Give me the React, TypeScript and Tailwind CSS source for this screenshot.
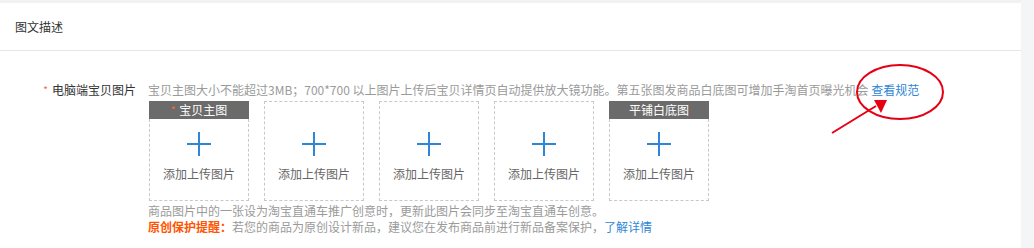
import React from "react";

const font = { fontFamily: '"Noto Sans CJK SC", "Noto Sans", sans-serif' };

function Plus() {
  return (
    <svg width="24" height="24" viewBox="0 0 24 24" className="block">
      <rect x="0" y="11" width="24" height="2" fill="#2f86d6" />
      <rect x="11" y="0" width="2" height="24" fill="#2f86d6" />
    </svg>
  );
}

function UploadBox({ title, required }: { title?: string; required?: boolean }) {
  const body = (
    <div className="flex flex-col items-center">
      <div className="mt-[13px]">
        <Plus />
      </div>
      <div className="mt-[10px] text-[12px] leading-[16px] text-[#666]">添加上传图片</div>
    </div>
  );
  if (title) {
    return (
      <div className="w-[100px] h-[100px] flex flex-col">
        <div className="h-[18px] bg-[#6b6b6b] text-white text-[12px] leading-[18px] text-center">
          {required && <span className="text-[#ff6a2a] text-[10px] mr-[4px] align-top">*</span>}
          {title}
        </div>
        <div className="flex-1 border-x border-b border-dashed border-[#c8c8c8]">{body}</div>
      </div>
    );
  }
  return (
    <div className="w-[100px] h-[100px] border border-dashed border-[#c8c8c8]">
      <div className="h-[17px]" />
      {body}
    </div>
  );
}

export default function App() {
  return (
    <div className="w-[1034px] h-[248px] flex bg-white overflow-hidden" style={font}>
      <div className="w-[1021px] h-full relative">
        <div className="h-[3px] bg-[#f2f2f2]" />
        <div className="h-[48px] border-b border-[#e6e6e6] flex items-center px-[15px] text-[12px] text-[#333]">
          图文描述
        </div>
        <div className="flex pt-[30px]">
          <div className="w-[136px] text-right text-[12px] leading-[18px] text-[#333]">
            <span className="text-[#f26a3a] text-[10px] mr-[4px] align-top">*</span>
            电脑端宝贝图片
          </div>
          <div className="ml-[12px] flex flex-col">
            <div className="text-[12px] leading-[18px] text-[#9a9a9a] whitespace-nowrap">
              宝贝主图大小不能超过3MB；700*700 以上图片上传后宝贝详情页自动提供放大镜功能。第五张图发商品白底图可增加手淘首页曝光机会{" "}
              <span className="text-[#2f86d6]">查看规范</span>
            </div>
            <div className="mt-[2px] ml-[1px] flex gap-[15px]">
              <UploadBox title="宝贝主图" required />
              <UploadBox />
              <UploadBox />
              <UploadBox />
              <UploadBox title="平铺白底图" />
            </div>
            <div className="mt-[2px] text-[12px] leading-[16px] text-[#9a9a9a] whitespace-nowrap">
              商品图片中的一张设为淘宝直通车推广创意时，更新此图片会同步至淘宝直通车创意。
            </div>
            <div className="text-[12px] leading-[16px] text-[#9a9a9a] whitespace-nowrap">
              <span className="text-[#ff5500] font-bold">原创保护提醒：</span>
              若您的商品为原创设计新品，建议您在发布商品前进行新品备案保护，
              <span className="text-[#2f86d6]">了解详情</span>
            </div>
          </div>
        </div>
        <svg className="absolute left-0 top-0 pointer-events-none" width="1021" height="248">
          <ellipse cx="900" cy="92" rx="43" ry="27" fill="none" stroke="#e60012" strokeWidth="2" />
          <line x1="832" y1="133" x2="876" y2="106" stroke="#e60012" strokeWidth="2" />
          <polygon points="887,100 874,100 881,113" fill="#e60012" />
        </svg>
      </div>
      <div className="flex-1 bg-[#f4f5f7]" />
    </div>
  );
}
